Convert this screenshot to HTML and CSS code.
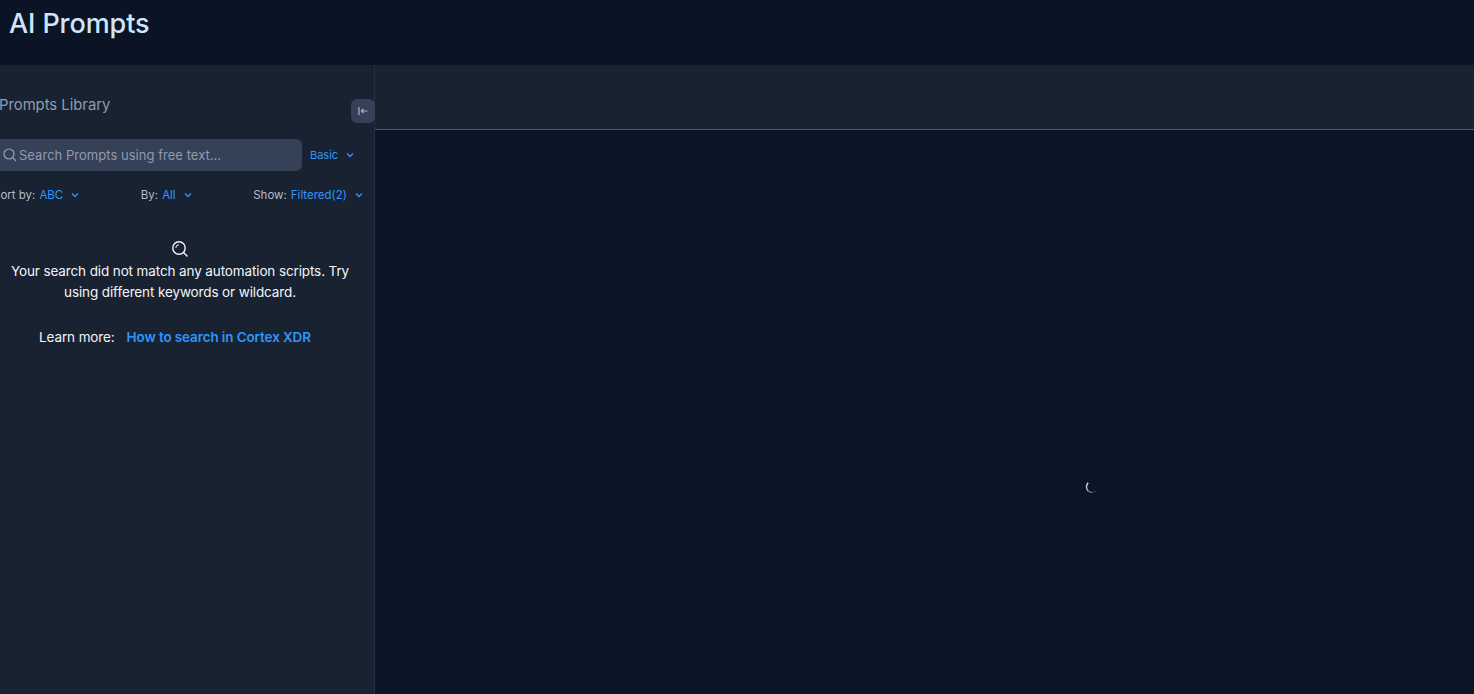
FILE: index.html
```html
<!DOCTYPE html>
<html lang="en">
<head>
    <meta charset="UTF-8">
    <meta name="viewport" content="width=device-width, initial-scale=1.0">
    <title>AI Prompts</title>
    <link rel="stylesheet" href="styles.css">
</head>
<body>
    <header class="page-header">
        <h1>AI Prompts</h1>
    </header>

    <div class="main">
        <aside class="sidebar">
            <div class="sidebar-inner">
                <div class="library-head">
                    <h2>Prompts Library</h2>
                    <button class="collapse-btn" aria-label="Collapse">
                        <svg width="10" height="10" viewBox="0 0 10 10" fill="none" stroke="#aab4c4" stroke-width="1.2">
                            <path d="M1 1v8"/>
                            <path d="M9.500 5H3.500M5.500 3L3.500 5l2 2"/>
                        </svg>
                    </button>
                </div>

                <div class="search-row">
                    <div class="search-box">
                        <svg width="14" height="14" viewBox="0 0 14 14" fill="none" stroke="#97a3b6" stroke-width="1.200">
                            <circle cx="6" cy="6" r="5"/>
                            <path d="M9.700 9.700L13 13"/>
                        </svg>
                        <span>Search Prompts using free text...</span>
                    </div>
                    <div class="basic">
                        <span>Basic</span>
                        <svg class="chevron" viewBox="0 0 8 6"><path d="M1 1.500l3 3 3-3"/></svg>
                    </div>
                </div>

                <div class="filters">
                    <div class="filter">Sort by: <b>ABC</b>
                        <svg class="chevron" viewBox="0 0 8 6"><path d="M1 1.500l3 3 3-3"/></svg>
                    </div>
                    <div class="filter">By: <b>All</b>
                        <svg class="chevron" viewBox="0 0 8 6"><path d="M1 1.500l3 3 3-3"/></svg>
                    </div>
                    <div class="filter">Show: <b>Filtered(2)</b>
                        <svg class="chevron" viewBox="0 0 8 6"><path d="M1 1.500l3 3 3-3"/></svg>
                    </div>
                </div>

                <div class="empty">
                    <svg class="empty-icon" width="18" height="18" viewBox="0 0 18 18" fill="none" stroke="#f2f5f9" stroke-width="1.400">
                        <circle cx="8" cy="8" r="6.200"/>
                        <path d="M4.800 8a3.200 3.200 0 0 1 3.200-3.200" stroke-width="1"/>
                        <path d="M12.500 12.500L16.500 16.500"/>
                    </svg>
                    <p>Your search did not match any automation scripts. Try using different keywords or wildcard.</p>
                    <div class="learn">
                        <span>Learn more:</span>
                        <a href="#">How to search in Cortex XDR</a>
                    </div>
                </div>
            </div>
        </aside>

        <section class="content">
            <div class="content-bar"></div>
            <div class="content-body">
                <svg class="spinner" width="14" height="14" viewBox="0 0 14 14" fill="none" stroke="#d5dbe3" stroke-width="1.500">
                    <path d="M3.200 2.800A5.500 5.500 0 0 0 1.500 7"/>
                    <path d="M1.500 7A5.500 5.500 0 0 0 3.100 10.900" opacity="0.8"/>
                    <path d="M3.100 10.900A5.500 5.500 0 0 0 7 12.500" opacity="0.45"/>
                    <path d="M7 12.500A5.500 5.500 0 0 0 11 10.800" opacity="0.15"/>
                </svg>
            </div>
        </section>
    </div>
</body>
</html>
```

FILE: styles.css
```css
* {
    margin: 0;
    padding: 0;
    box-sizing: border-box;
    font-family: 'Inter', 'Noto Sans', sans-serif;
}

body {
    background-color: #0b1526;
    height: 694px;
    overflow: hidden;
}

.page-header {
    height: 65px;
    background-color: #0a1424;
    padding: 6px 9px;
}

.page-header h1 {
    font-size: 27px;
    line-height: 36px;
    font-weight: 500;
    color: #cfe5fc;
    letter-spacing: -0.1px;
}

.main {
    display: flex;
    height: 629px;
}

.sidebar {
    width: 375px;
    flex-shrink: 0;
    background-color: #182231;
    border-right: 1px solid #263040;
}

.sidebar-inner {
    width: 386px;
    margin-left: -12px;
}

.library-head {
    display: flex;
    justify-content: space-between;
    padding: 30px 0 0 11px;
    height: 74px;
}

.library-head h2 {
    font-size: 14.800px;
    line-height: 20px;
    font-weight: 400;
    color: #8f9db2;
}

.collapse-btn {
    width: 24px;
    height: 24px;
    margin-top: 4px;
    margin-right: -1px;
    border: none;
    border-radius: 6px;
    background-color: #354157;
    display: flex;
    align-items: center;
    justify-content: center;
}

.search-row {
    display: flex;
    align-items: center;
    height: 32px;
}

.search-box {
    width: 314px;
    height: 32px;
    background-color: #354157;
    border-radius: 6px;
    display: flex;
    align-items: center;
    gap: 2px;
    padding-left: 15px;
    font-size: 13px;
    letter-spacing: 0.03px;
    color: #8f9bae;
}

.basic {
    margin-left: 8px;
    font-size: 11px;
    color: #2e96ff;
    display: flex;
    align-items: center;
    gap: 8px;
}

.chevron {
    width: 8px;
    height: 6px;
    fill: none;
    stroke: #2e96ff;
    stroke-width: 1.300;
}

.filters {
    display: flex;
    justify-content: space-between;
    padding: 16px 11px 0 5px;
}

.filter {
    font-size: 11.500px;
    line-height: 16px;
    color: #b3bcca;
    display: flex;
    align-items: center;
    gap: 4px;
}

.filter b {
    font-weight: 400;
    color: #2e96ff;
}

.filter .chevron {
    margin-left: 4px;
}

.empty {
    width: 360px;
    margin-left: 12px;
    padding-top: 37px;
    text-align: center;
    color: #f2f5f9;
    font-size: 13.500px;
    letter-spacing: -0.12px;
}

.empty-icon {
    display: block;
    margin: 0 auto 3px;
}

.empty p {
    line-height: 21px;
    padding: 0 3px;
}

.learn {
    margin-top: 24px;
    padding-right: 10px;
    line-height: 21px;
    display: flex;
    justify-content: center;
    gap: 12px;
}

.learn a {
    color: #2e96ff;
    text-decoration: none;
    font-weight: 600;
}

.content {
    flex: 1;
    display: flex;
    flex-direction: column;
}

.content-bar {
    height: 65px;
    background-color: #182231;
    border-bottom: 1px solid #4d5869;
}

.content-body {
    flex: 1;
    background-color: #0b1526;
    display: flex;
    align-items: center;
    justify-content: center;
    padding: 150px 0 0 335px;
}

.spinner {
    display: block;
}
```
